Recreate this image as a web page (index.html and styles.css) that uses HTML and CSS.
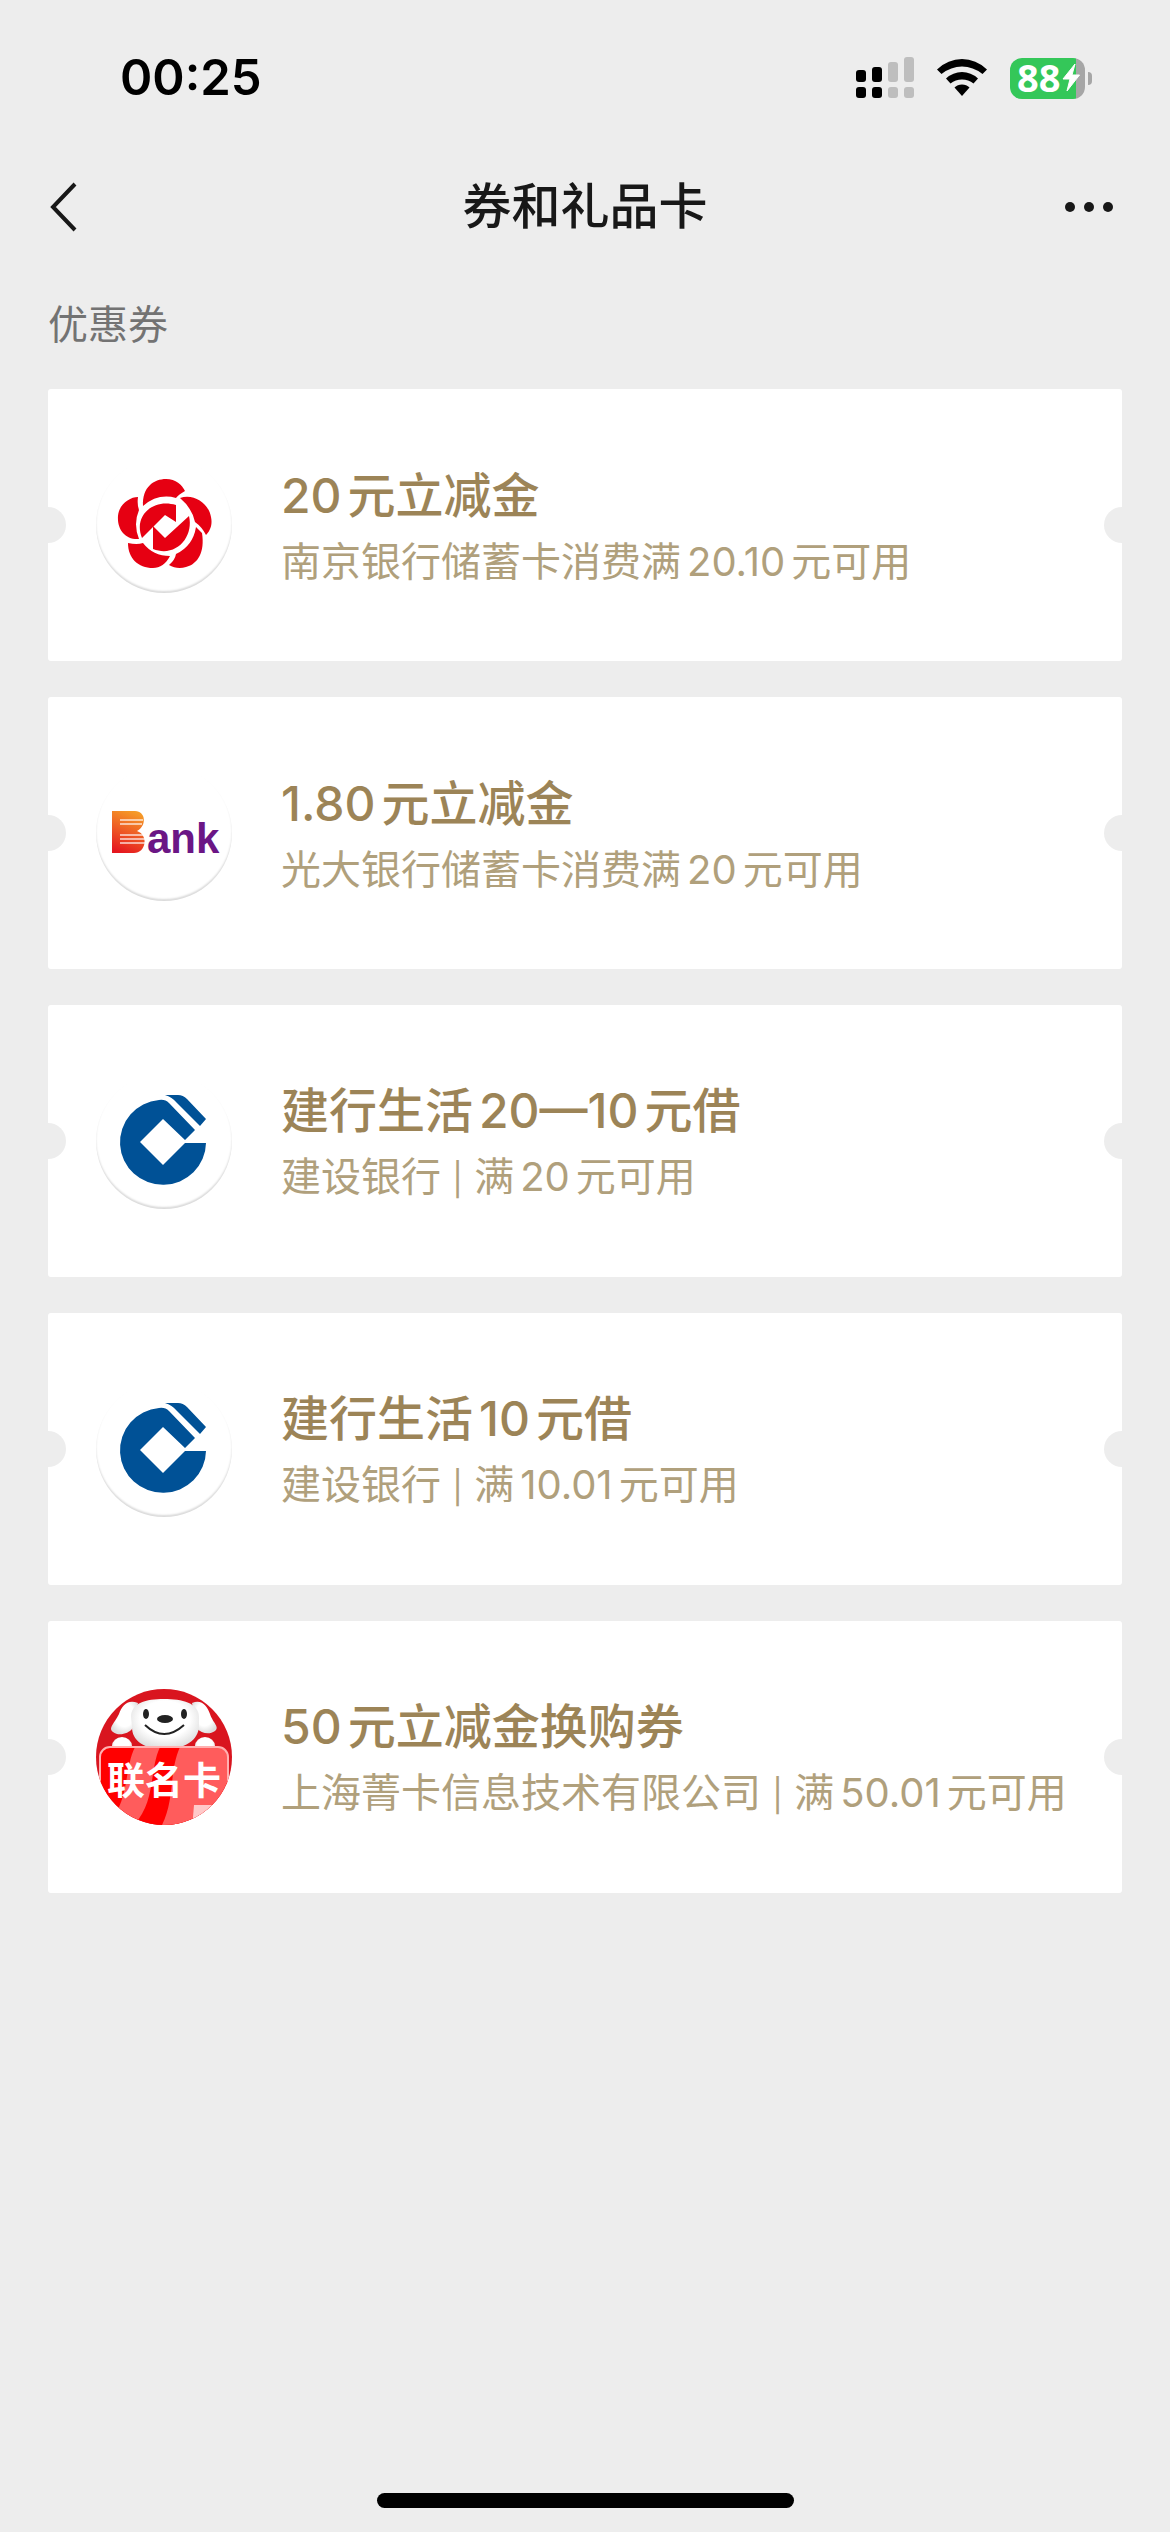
FILE: index.html
```html
<!DOCTYPE html>
<html lang="zh-CN">
  <head>
    <meta charset="UTF-8" />
    <meta name="viewport" content="width=device-width, initial-scale=1.0" />
    <title>券和礼品卡</title>
    <link rel="stylesheet" href="styles.css">
  </head>
  <body>
    <div class="status-bar">
      <div class="time">00:25</div>
      <div class="status-icons">
        <svg class="signal" width="58" height="42" viewBox="0 0 58 42">
          <g fill="#000">
            <rect x="0" y="13" width="10" height="12" rx="3" />
            <rect x="16" y="10" width="10" height="15" rx="3" />
            <rect x="0" y="30" width="10" height="11" rx="3" />
            <rect x="16" y="30" width="10" height="11" rx="3" />
          </g>
          <g fill="#bebebe">
            <rect x="32" y="5" width="10" height="20" rx="3" />
            <rect x="48" y="0" width="10" height="25" rx="3" />
            <rect x="32" y="30" width="10" height="11" rx="3" />
            <rect x="48" y="30" width="10" height="11" rx="3" />
          </g>
        </svg>
        <svg class="wifi" width="52" height="42" viewBox="0 0 52 42">
          <path d="M1 12.5Q12 2 26 2T51 12.5L46.500 17Q37 9.500 26 9.500T5.500 17Z" />
          <path d="M10 21.500Q17 15 26 15T42 21.500L37.500 26.500Q32.500 22.500 26 22.500T14.500 26.500Z" />
          <path d="M18.500 30.500Q21.500 27.500 26 27.500T33.500 30.500L26 39Z" />
        </svg>
        <div class="battery">
          <span class="battery-level">88</span>
          <svg class="bolt" width="18" height="29" viewBox="0 0 18 29">
            <path d="M13 1 1 16H8L5 28 17.500 12H10Z" fill="#fff" stroke="#fff" stroke-linejoin="round" />
          </svg>
        </div>
      </div>
    </div>

    <header class="nav-bar">
      <button class="nav-button" type="button" aria-label="返回">
        <svg width="30" height="50" viewBox="0 0 30 50">
          <path d="M27 2 5 25 27 48" fill="none" stroke="#181818" stroke-width="4" />
        </svg>
      </button>
      <h1>券和礼品卡</h1>
      <button class="nav-button nav-more" type="button" aria-label="更多">
        <svg width="50" height="12" viewBox="0 0 50 12">
          <circle cx="6" cy="6" r="5" fill="#181818" />
          <circle cx="25" cy="6" r="5" fill="#181818" />
          <circle cx="44" cy="6" r="5" fill="#181818" />
        </svg>
      </button>
    </header>

    <main>
      <h2>优惠券</h2>
      <ul class="coupon-list">
        <li class="coupon">
          <div class="logo">
            <svg viewBox="0 -2 136 136">
              <g fill="#e60012">
                <path d="M47 47C46 28 58 20 70 20C80 20 86 26 89 32Q82 36 80 39Q62 34 47 47Z" />
                <path d="M84 39C98 34 113 45 115 58C117 67 113 73 110 76Q106 68 99 63Q96 49 84 39Z" />
                <path d="M106 74C109 93 102 105 90 108C84 110 78 109 73 106Q79 101 80 95Q97 87 100 68Z" />
                <path d="M74 97C70 105 64 109 57 109C42 109 32 99 32 84Q41 86 47 84Q57 97 74 97Z" />
                <path d="M43 80C29 81 21 70 22 57C23 45 34 38 42 38Q41 46 43 51Q37 65 43 80Z" />
                <path d="M46 79C37 57 57 39 80 46V63L69 56 46 79Z" />
                <path d="M57 67 69 79 93 57C98 78 80 99 57 90Z" />
              </g>
            </svg>
          </div>
          <div class="coupon-text">
            <h3><span class="num-lead">20</span>元立减金</h3>
            <p>南京银行储蓄卡消费满<span class="num">20.10</span>元可用</p>
          </div>
        </li>

        <li class="coupon">
          <div class="logo">
            <svg viewBox="0 0 136 136">
              <defs>
                <linearGradient id="ember" x1="0.6" y1="0" x2="0.3" y2="1">
                  <stop offset="0" stop-color="#f59a28" />
                  <stop offset="0.5" stop-color="#ee5a24" />
                  <stop offset="1" stop-color="#e5171f" />
                </linearGradient>
              </defs>
              <path d="M16 46H39C50 46 51 61 41 66C53 70 50 88 38 88H16Z" fill="url(#ember)" />
              <path d="M24 55H47M24 59H46M24 70H48M24 74H50M24 78H50" stroke="#fff" stroke-width="1.500" opacity="0.8" />
              <text class="bank-word" x="51" y="88">ank</text>
            </svg>
          </div>
          <div class="coupon-text">
            <h3><span class="num-lead">1.80</span>元立减金</h3>
            <p>光大银行储蓄卡消费满<span class="num">20</span>元可用</p>
          </div>
        </li>

        <li class="coupon">
          <div class="logo">
            <svg viewBox="0 10 136 136">
              <g fill="#005196">
                <path d="M89 77 99 67 73 40Q69 36 63 37A43 42.500 0 1 0 110 80H89L67 102 44 79 67 56Z" />
                <path d="M69 32H82Q87 32 91 36L110 56 104 63 81 40Q76 34 69 32Z" />
              </g>
            </svg>
          </div>
          <div class="coupon-text">
            <h3>建行生活<span class="num">20—10</span>元借</h3>
            <p>建设银行 <span class="sep">|</span> 满<span class="num">20</span>元可用</p>
          </div>
        </li>

        <li class="coupon">
          <div class="logo">
            <svg viewBox="0 10 136 136">
              <g fill="#005196">
                <path d="M89 77 99 67 73 40Q69 36 63 37A43 42.500 0 1 0 110 80H89L67 102 44 79 67 56Z" />
                <path d="M69 32H82Q87 32 91 36L110 56 104 63 81 40Q76 34 69 32Z" />
              </g>
            </svg>
          </div>
          <div class="coupon-text">
            <h3>建行生活<span class="num">10</span>元借</h3>
            <p>建设银行 <span class="sep">|</span> 满<span class="num">10.01</span>元可用</p>
          </div>
        </li>

        <li class="coupon">
          <div class="logo">
            <svg viewBox="0 0 136 136">
              <defs>
                <clipPath id="badge"><circle cx="68" cy="68" r="68" /></clipPath>
                <clipPath id="card"><rect x="4" y="58" width="128" height="100" rx="10" /></clipPath>
                <radialGradient id="fur" cx="0.5" cy="0.4" r="0.6">
                  <stop offset="0.6" stop-color="#fff" />
                  <stop offset="1" stop-color="#dedede" />
                </radialGradient>
              </defs>
              <g clip-path="url(#badge)">
                <rect width="136" height="136" fill="#d9151f" />
                <g fill="url(#fur)">
                  <path d="M42 14C31 10 26 17 23 25C18 35 12 39 17 43C23 48 33 44 36 40Z" />
                  <path d="M96 14C106 10 111 17 114 25C117 34 124 38 119 42C112 47 105 43 101 40Z" />
                  <path d="M35 28C35 14 50 10 68 10S103 14 103 28V36C103 52 88 60 68 60S36 52 36 38Z" />
                  <ellipse cx="26" cy="57" rx="10" ry="9" />
                  <ellipse cx="109" cy="57" rx="10" ry="9" />
                </g>
                <ellipse cx="50" cy="25" rx="3" ry="5" fill="#222" />
                <ellipse cx="88" cy="25" rx="3" ry="5" fill="#222" />
                <ellipse cx="69" cy="30" rx="8" ry="4" fill="#222" />
                <path d="M49 36Q68 54 88 36" fill="none" stroke="#222" stroke-width="2" />
                <g clip-path="url(#card)">
                  <rect x="4" y="58" width="128" height="80" fill="#f00" />
                  <path d="M39 58H64C53 82 60 112 38 136H12C34 110 28 80 39 58Z" fill="#ff5c5c" />
                  <path d="M84 58H136V136H66C79 110 73 82 84 58Z" fill="#ff5c5c" />
                  <path d="M98 116H124V140H96Z" fill="#ffc9c9" />
                </g>
                <rect x="4" y="58" width="128" height="100" rx="10" fill="none" stroke="#ffb0b0" stroke-width="2" />
              </g>
              <text class="badge-word" x="68" y="105">联名卡</text>
            </svg>
          </div>
          <div class="coupon-text">
            <h3><span class="num-lead">50</span>元立减金换购券</h3>
            <p>上海菁卡信息技术有限公司 <span class="sep">|</span> 满<span class="num">50.01</span>元可用</p>
          </div>
        </li>
      </ul>
    </main>

    <div class="home-indicator"></div>
  </body>
</html>
```
FILE: styles.css
```css
* {
  box-sizing: border-box;
}
body {
  font-family: Inter, "Noto Sans CJK SC", sans-serif;
  margin: 0;
  background-color: #ededed;
  color: #181818;
  display: flex;
  flex-direction: column;
  min-height: 100vh;
}
h1,
h2,
h3,
p,
ul {
  margin: 0;
  padding: 0;
}

/* status bar */
.status-bar {
  display: flex;
  justify-content: space-between;
  align-items: center;
  height: 141px;
  padding: 15px 85px 0 120px;
}
.time {
  color: #000;
  font-size: 49px;
  font-weight: 600;
  line-height: 60px;
}
.status-icons {
  display: flex;
  align-items: center;
  gap: 22px;
}
.battery {
  position: relative;
  display: flex;
  align-items: center;
  gap: 2px;
  width: 75px;
  height: 41px;
  padding: 0 0 2px 7px;
  border-radius: 12px;
  background: linear-gradient(to right, #34c759 66px, #a6a6a6 66px);
}
.battery::after {
  content: "";
  position: absolute;
  left: 78px;
  top: 14px;
  width: 4px;
  height: 13px;
  border-radius: 0 4px 4px 0;
  background: #a6a6a6;
}
.battery-level {
  color: #fff;
  font-family: "Open Sans", sans-serif;
  font-size: 38px;
  font-weight: 700;
  line-height: 40px;
}

/* navigation */
.nav-bar {
  display: flex;
  justify-content: space-between;
  align-items: center;
  height: 132px;
  padding: 0 48px;
}
.nav-bar h1 {
  font-size: 49px;
  font-weight: 500;
  line-height: 72px;
}
.nav-button {
  display: flex;
  align-items: center;
  width: 72px;
  height: 72px;
  padding: 0;
  border: none;
  background: none;
  cursor: pointer;
}
.nav-more {
  justify-content: flex-end;
  padding-right: 8px;
}

/* coupons */
main {
  padding: 24px 48px 0;
}
h2 {
  color: #737373;
  font-size: 40px;
  font-weight: 400;
  line-height: 56px;
}
.coupon-list {
  display: flex;
  flex-direction: column;
  gap: 36px;
  margin-top: 36px;
  list-style: none;
}
.coupon {
  position: relative;
  display: flex;
  align-items: center;
  gap: 49px;
  min-height: 272px;
  padding: 0 48px;
  border-radius: 3px;
  background: #fff;
  overflow: hidden;
}
.coupon::before,
.coupon::after {
  content: "";
  position: absolute;
  top: calc(50% - 18px);
  width: 36px;
  height: 36px;
  border-radius: 50%;
  background: #ededed;
}
.coupon::before {
  left: -18px;
}
.coupon::after {
  right: -18px;
}
.logo {
  flex: none;
  width: 136px;
  height: 136px;
  border-radius: 50%;
  box-shadow: inset 0 -2px 2px rgba(0, 0, 0, 0.15);
}
.logo svg {
  display: block;
}
.coupon-text {
  padding-top: 2px;
  white-space: nowrap;
}
.coupon-text h3 {
  color: #9c8457;
  font-size: 48px;
  font-weight: 500;
  line-height: 72px;
}
.coupon-text p {
  color: #b0a07c;
  font-size: 40px;
  line-height: 60px;
}
.num {
  margin: 0 6px;
}
.num-lead {
  margin-right: 6px;
}
.sep {
  font-size: 32px;
}
.bank-word {
  font-family: "Liberation Sans", sans-serif;
  font-size: 42px;
  font-weight: 700;
  fill: #6b1685;
}
.badge-word {
  font-size: 38px;
  font-weight: 700;
  text-anchor: middle;
  fill: #fff;
}

.home-indicator {
  width: 417px;
  height: 15px;
  margin: auto auto 24px;
  border-radius: 8px;
  background: #000;
}
```
